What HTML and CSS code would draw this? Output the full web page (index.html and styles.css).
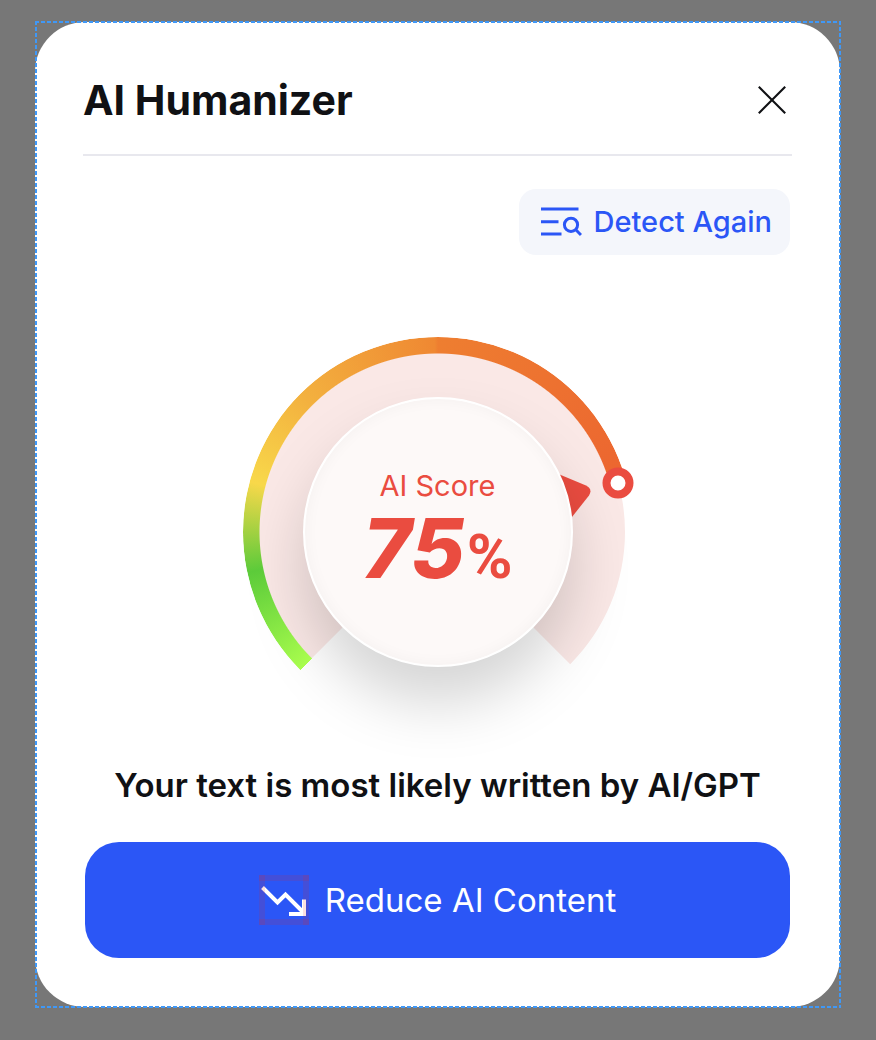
FILE: index.html
```html
<!DOCTYPE html>
<html lang="en">
<head>
<meta charset="utf-8">
<meta name="viewport" content="width=device-width, initial-scale=1">
<title>AI Humanizer</title>
<link rel="stylesheet" href="styles.css">
</head>
<body>
<main class="card">
  <header class="card-header">
    <h1 class="title">AI Humanizer</h1>
    <button class="close" type="button" aria-label="Close">
      <svg width="28" height="28" viewBox="0 0 28 28" fill="none" stroke="currentColor" stroke-width="2.1"><path d="M0.8 0.8 27.2 27.2M27.2 0.8 0.8 27.2"/></svg>
    </button>
  </header>
  <section class="content">
    <button class="detect" type="button">
      <svg width="41" height="32" viewBox="0 0 41 32" fill="none" stroke="currentColor" stroke-width="3"><path d="M0 3H37.5M0 15.700H17.5M0 28H20.5"/><circle cx="30" cy="18.800" r="6.600"/><path d="M34.600 23.500 40 29"/></svg>
      <span>Detect Again</span>
    </button>
    <div class="gauge">
      <svg class="track" viewBox="0 0 390 390">
        <path fill="#fae8e6" d="M195 195 62.800 327.200A187 187 0 1 1 327.200 327.200Z"/>
        <path fill="#ea4c40" d="M313 136 343 148.500Q350 152 346 158.500L329 180 313 169Z"/>
      </svg>
      <div class="dial">
        <span class="score-label">AI Score</span>
        <span class="score"><strong class="score-value">75</strong><span class="score-unit">%</span></span>
      </div>
      <div class="band"></div>
      <svg class="marker" viewBox="0 0 390 390"><circle cx="375" cy="146" r="11.500" fill="#fff" stroke="#ea4c40" stroke-width="8"/></svg>
    </div>
    <p class="message">Your text is most likely written by AI/GPT</p>
    <button class="reduce" type="button">
      <svg width="50" height="50" viewBox="0 0 50 50" fill="none">
        <path stroke="#fff" stroke-width="4" d="M3.500 12.500 18.500 27.500 26.500 19.500 44 37M30 39H45M45 24.500V41"/>
        <path fill="#e02b20" fill-opacity=".14" d="M0 0H50V6H0ZM0 44H50V50H0Z"/>
        <path fill="#e02b20" fill-opacity=".14" d="M0 0H6V50H0ZM44 0H50V50H44Z"/>
      </svg>
      <span>Reduce AI Content</span>
    </button>
  </section>
</main>
</body>
</html>
```
FILE: styles.css
```css
* {
  box-sizing: border-box;
}

body {
  margin: 0;
  padding: 22px 36px 33px 35px;
  background: #777;
  color: #101114;
  font-family: Inter, "Liberation Sans", sans-serif;
}

button {
  margin: 0;
  border: 0;
  font-family: inherit;
  cursor: pointer;
}

svg {
  display: block;
  flex: none;
}

.card {
  position: relative;
  padding: 54px 48px 49px;
  border-radius: 50px;
  background: #fff;
}

/* Dashed selection frame around the card */
.card::after {
  content: "";
  position: absolute;
  inset: -1px -1px -1px 0;
  pointer-events: none;
  background:
    repeating-linear-gradient(90deg, #3f98f7 0 4px, transparent 4px 6px) top / 100% 2px no-repeat,
    repeating-linear-gradient(90deg, #3f98f7 0 4px, transparent 4px 6px) bottom / 100% 2px no-repeat,
    repeating-linear-gradient(#3f98f7 0 4px, transparent 4px 6px) left / 2px 100% no-repeat,
    repeating-linear-gradient(#3f98f7 0 4px, transparent 4px 6px) right / 2px 100% no-repeat;
}

.card-header {
  display: flex;
  align-items: center;
  justify-content: space-between;
  padding: 0 6px 30px 0;
  border-bottom: 2px solid #e8e8ee;
}

.title {
  margin: 0;
  font-size: 41px;
  line-height: 48px;
  font-weight: 700;
}

.close {
  padding: 0;
  background: none;
  color: #101114;
}

.content {
  display: flex;
  flex-direction: column;
  padding: 33px 2px 0;
}

.detect {
  display: flex;
  align-items: center;
  align-self: flex-end;
  gap: 12px;
  padding: 15px 18px 15px 22px;
  border-radius: 17px;
  background: #f4f6fb;
  color: #2b56f6;
  font-size: 29px;
  line-height: 36px;
  font-weight: 500;
}

.gauge {
  display: grid;
  align-self: center;
  place-items: center;
  width: 390px;
  height: 390px;
  margin-top: 82px;
}

.gauge > * {
  grid-area: 1 / 1;
}

.track,
.band,
.marker {
  width: 100%;
  height: 100%;
}

.marker {
  position: relative;
  overflow: visible;
}

.band {
  border-radius: 50%;
  background: conic-gradient(from 225deg, #a9fd4d 0deg, #5ccb3a 33deg, #f8d84a 60deg, #f3b13f 90deg, #ef8832 134deg, #ee7e30 135deg, #ec6530 210deg, transparent 210deg);
  mask: radial-gradient(circle closest-side, transparent 178px, #000 179px);
}

.dial {
  display: flex;
  flex-direction: column;
  align-items: center;
  width: 270px;
  height: 270px;
  padding-top: 71px;
  border: 2px solid #fff;
  border-radius: 50%;
  background: #fdf9f8;
  box-shadow: 0 36px 60px rgba(0, 0, 0, 0.17), inset 0 0 16px rgba(0, 0, 0, 0.04);
  color: #ea4c40;
}

.score-label {
  font-size: 29px;
  line-height: 32px;
}

.score {
  display: flex;
  align-items: baseline;
  gap: 2px;
  line-height: 92px;
}

.score-value {
  font-size: 83px;
  font-weight: 800;
  font-style: italic;
}

.score-unit {
  font-family: Roboto, sans-serif;
  font-size: 62px;
  font-weight: 700;
}

.message {
  margin: 34px 0 0;
  font-size: 33px;
  line-height: 48px;
  font-weight: 600;
  text-align: center;
}

.reduce {
  display: flex;
  align-items: center;
  justify-content: center;
  gap: 16px;
  margin-top: 33px;
  padding: 33px 24px;
  border-radius: 34px;
  background: #2b56f6;
  color: #fff;
  font-size: 33px;
  line-height: 50px;
  font-weight: 400;
}
```
